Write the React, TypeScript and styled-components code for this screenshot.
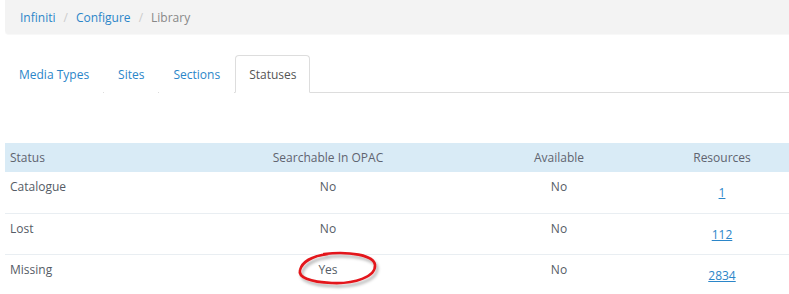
import styled, { createGlobalStyle } from 'styled-components';

type StatusRow = {
  name: string;
  searchable: string;
  available: string;
  resources: number;
};

const rows: StatusRow[] = [
  { name: 'Catalogue', searchable: 'No', available: 'No', resources: 1 },
  { name: 'Lost', searchable: 'No', available: 'No', resources: 112 },
  { name: 'Missing', searchable: 'Yes', available: 'No', resources: 2834 },
];

const tabs = ['Media Types', 'Sites', 'Sections', 'Statuses'];

const GlobalStyle = createGlobalStyle`
  body {
    margin: 0;
    background: #fff;
    font-family: "Open Sans", "DejaVu Sans", sans-serif;
    font-size: 12px;
    color: #555c66;
    overflow: hidden;
  }
`;

const Page = styled.div`
  padding-left: 5px;
  width: 784px;
`;

const Breadcrumb = styled.nav`
  display: flex;
  align-items: center;
  height: 34px;
  padding-left: 15px;
  background: #f3f3f3;
  border-radius: 0 0 0 4px;
  border-bottom: 1px solid #f8f8f8;
`;

const Crumb = styled.span<{ $active?: boolean }>`
  color: ${(p) => (p.$active ? '#888' : '#2b86c9')};
`;

const Divider = styled.span`
  color: #ccc;
  margin: 0 8px;
`;

const TabBar = styled.ul`
  display: flex;
  margin: 20px 0 0;
  padding: 0;
  list-style: none;
  border-bottom: 1px solid #dddddd;
`;

const Tab = styled.li<{ $active?: boolean }>`
  height: 36px;
  display: flex;
  align-items: center;
  padding: 0 13px;
  margin-right: 1px;
  margin-bottom: -1px;
  border: 1px solid ${(p) => (p.$active ? '#dddddd' : 'transparent')};
  border-bottom-color: ${(p) => (p.$active ? '#fff' : 'transparent')};
  border-radius: 4px 4px 0 0;
  background: #fff;
  color: ${(p) => (p.$active ? '#555' : '#2b86c9')};
`;

const TableWrap = styled.div`
  position: relative;
  margin-top: 50px;
`;

const Table = styled.table`
  width: 100%;
  border-collapse: collapse;
  table-layout: fixed;
`;

const HeadCell = styled.th<{ $align?: 'left' | 'center'; $width?: number }>`
  height: 29px;
  padding: 0 5px;
  background: #d9ebf6;
  font-weight: normal;
  color: #5f6470;
  text-align: ${(p) => p.$align ?? 'center'};
  width: ${(p) => (p.$width ? `${p.$width}px` : 'auto')};
`;

const Row = styled.tr`
  height: 41px;
  & + & td {
    border-top: 1px solid #e9eef2;
  }
`;

const Cell = styled.td<{ $align?: 'left' | 'center' }>`
  padding: 6px 5px 0;
  vertical-align: top;
  text-align: ${(p) => p.$align ?? 'center'};
`;

const LinkCell = styled(Cell)`
  padding-top: 12px;
  padding-right: 17px;
`;

const ResourceLink = styled.a`
  color: #2b86c9;
  text-decoration: underline;
`;

// hand-drawn red circle marking the "Yes" cell
const Annotation = styled.svg`
  position: absolute;
  left: 289px;
  top: 108px;
  pointer-events: none;
`;

export default function App() {
  return (
    <Page>
      <GlobalStyle />
      <Breadcrumb>
        <Crumb>Infiniti</Crumb>
        <Divider>/</Divider>
        <Crumb>Configure</Crumb>
        <Divider>/</Divider>
        <Crumb $active>Library</Crumb>
      </Breadcrumb>
      <TabBar>
        {tabs.map((t) => (
          <Tab key={t} $active={t === 'Statuses'}>
            {t}
          </Tab>
        ))}
      </TabBar>
      <TableWrap>
        <Table>
          <thead>
            <tr>
              <HeadCell $align="left" $width={190}>Status</HeadCell>
              <HeadCell $width={236}>Searchable In OPAC</HeadCell>
              <HeadCell $width={206}>Available</HeadCell>
              <HeadCell style={{ paddingRight: 17 }}>Resources</HeadCell>
            </tr>
          </thead>
          <tbody>
            {rows.map((r) => (
              <Row key={r.name}>
                <Cell $align="left">{r.name}</Cell>
                <Cell>{r.searchable}</Cell>
                <Cell>{r.available}</Cell>
                <LinkCell>
                  <ResourceLink href="#">{r.resources}</ResourceLink>
                </LinkCell>
              </Row>
            ))}
          </tbody>
        </Table>
        <Annotation width="92" height="46" viewBox="0 0 92 46">
          <defs>
            <filter id="shadow" x="-20%" y="-30%" width="140%" height="170%">
              <feDropShadow dx="2" dy="3" stdDeviation="1.6" floodColor="#000" floodOpacity="0.3" />
            </filter>
          </defs>
          <path
            d="M 30 3 C 55 0, 80 4, 81 14 C 82 26, 60 33, 38 32 C 15 31, 4 26, 6 19 C 8 11, 18 5, 34 3"
            fill="none"
            stroke="#e3161b"
            strokeWidth="2.6"
            strokeLinecap="round"
            filter="url(#shadow)"
          />
        </Annotation>
      </TableWrap>
    </Page>
  );
}
